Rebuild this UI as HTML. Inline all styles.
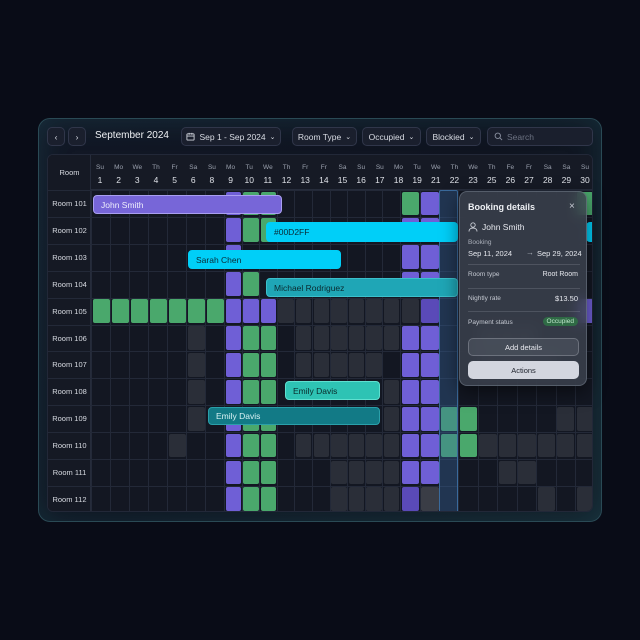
<!DOCTYPE html>
<html><head><meta charset="utf-8"><style>
*{box-sizing:border-box;margin:0;padding:0}
body{width:640px;height:640px;background:#090c17;font-family:"Liberation Sans",sans-serif;color:#e6e8ee;position:relative;overflow:hidden}
.panel{position:absolute;left:38px;top:118px;width:564px;height:404px;border-radius:12px;background:linear-gradient(135deg,#121826 0%,#0f1420 50%,#13202a 100%);border:1px solid #2a4a55;box-shadow:0 0 30px rgba(40,120,130,.25) inset}
.abs{position:absolute}
.btn{position:absolute;top:127px;height:19px;border:1px solid #30364a;border-radius:5px;background:#1a1f2d;font-size:8.5px;color:#d8dbe3;display:flex;align-items:center;justify-content:center;gap:4px}
.grid{position:absolute;left:47px;top:154px;width:546px;height:358px;border-radius:6px;background:#131722;overflow:hidden;border:1px solid #222838}
.hd{position:absolute;font-size:6.5px;color:#9aa0ad;text-align:center;width:19px}
.dn{position:absolute;font-size:8.5px;color:#dfe2e8;text-align:center;width:19px}
.rl{position:absolute;left:0;width:43px;font-size:7.5px;color:#d8dbe2;text-align:center}
.c{position:absolute;border-radius:2px}
.bar{position:absolute;border-radius:4px;font-size:8.5px;display:flex;align-items:center;padding-left:7px}
.pop{position:absolute;left:459px;top:191px;width:128px;height:195px;border-radius:8px;background:rgba(60,66,78,.82);border:1px solid rgba(150,160,175,.35);backdrop-filter:blur(6px);box-shadow:0 6px 18px rgba(0,0,0,.5)}
.pop .t{position:absolute;font-size:7px;color:#c5c9d2}
.sep{position:absolute;left:8px;width:112px;height:1px;background:rgba(180,185,195,.2)}
</style></head><body>
<div class="panel"></div>
<div class="btn" style="left:47px;width:18px">‹</div>
<div class="btn" style="left:68px;width:18px">›</div>
<div class="abs" style="left:95px;top:130px;font-size:10px;color:#eef0f4">September 2024</div>
<div class="btn" style="left:181px;width:100px"><svg width="9" height="9" viewBox="0 0 10 10"><rect x="1" y="2" width="8" height="7" rx="1" fill="none" stroke="#cfd3db"/><path d="M1 4.5h8M3.5 1v2M6.5 1v2" stroke="#cfd3db"/></svg>Sep 1 - Sep 2024 <span style="font-size:7px">⌄</span></div>
<div class="btn" style="left:292px;width:65px">Room Type <span style="font-size:7px">⌄</span></div>
<div class="btn" style="left:362px;width:59px">Occupied <span style="font-size:7px">⌄</span></div>
<div class="btn" style="left:426px;width:55px">Blockied <span style="font-size:7px">⌄</span></div>
<div class="btn" style="left:487px;width:106px;justify-content:flex-start;padding-left:6px;color:#6c7282"><svg width="9" height="9" viewBox="0 0 10 10"><circle cx="4.2" cy="4.2" r="3" fill="none" stroke="#8a90a0"/><path d="M6.5 6.5l2.5 2.5" stroke="#8a90a0"/></svg>Search</div>
<div class="grid" id="g"></div>
<div class="pop">
<div class="t" style="left:8px;top:10px;font-size:9px;color:#eef0f4;font-weight:bold">Booking details</div>
<div class="t" style="left:109px;top:9px;font-size:10px;color:#c8ccd4">×</div>
<svg class="abs" style="left:8px;top:30px" width="10" height="10" viewBox="0 0 10 10"><circle cx="5" cy="3" r="2.2" fill="none" stroke="#c8ccd4" stroke-width=".9"/><path d="M1 9.5c0-2.5 2-3.5 4-3.5s4 1 4 3.5" fill="none" stroke="#c8ccd4" stroke-width=".9"/></svg>
<div class="t" style="left:22px;top:30px;font-size:8.5px;color:#e6e8ee">John Smith</div>
<div class="t" style="left:8px;top:47px;font-size:6.5px;color:#a9aeb8">Booking</div>
<div class="t" style="left:8px;top:57px;font-size:7.5px;color:#e6e8ee">Sep 11, 2024</div>
<div class="t" style="left:66px;top:56px;font-size:8px;color:#a9aeb8">→</div>
<div class="t" style="left:77px;top:57px;font-size:7.5px;color:#e6e8ee">Sep 29, 2024</div>
<div class="sep" style="top:72px"></div>
<div class="t" style="left:8px;top:79px;font-size:6.5px">Room type</div>
<div class="t" style="right:8px;top:79px;font-size:7px;color:#e6e8ee">Root Room</div>
<div class="sep" style="top:96px"></div>
<div class="t" style="left:8px;top:103px;font-size:6.5px">Nightly rate</div>
<div class="t" style="right:8px;top:102px;font-size:7.5px;color:#e6e8ee">$13.50</div>
<div class="sep" style="top:119px"></div>
<div class="t" style="left:8px;top:127px;font-size:6.5px">Payment status</div>
<div class="t" style="right:8px;top:125px;font-size:6.5px;color:#bfe8cb;background:#2f6a45;border-radius:6px;padding:1px 4px">Occupied</div>
<div class="abs" style="left:8px;top:146px;width:111px;height:18px;border-radius:5px;border:1px solid rgba(180,185,195,.35);background:rgba(80,86,98,.6);font-size:7.5px;color:#e6e8ee;display:flex;align-items:center;justify-content:center">Add details</div>
<div class="abs" style="left:8px;top:169px;width:111px;height:18px;border-radius:5px;background:#d3d6df;font-size:7.5px;color:#1e222c;display:flex;align-items:center;justify-content:center">Actions</div>
</div>
<script>
var g=document.getElementById('g');
var days=[1,2,3,4,5,6,8,9,10,11,12,13,14,15,16,17,18,19,21,22,23,25,26,27,28,29,30];
var names=['Su','Mo','We','Th','Fr','Sa','Su','Mo','Tu','We','Th','Fr','Fr','Sa','Su','Su','Mo','Tu','We','Th','We','Th','Fe','Fr','Sa','Sa','Su'];
var anch=[[0,91],[7,224],[17,400],[19,439],[26,575]];
function cx(i){for(var a=0;a<anch.length-1;a++){var p=anch[a],q=anch[a+1];if(i<=q[0])return p[1]+(i-p[0])*(q[1]-p[1])/(q[0]-p[0])-47;}return 528;}
function cw(i){return i<26?cx(i+1)-cx(i):18.5;}
var RH=26.9,Y0=35;
var h='<div style="position:absolute;left:0;top:0;width:546px;height:35px;background:#161a25;border-bottom:1px solid #262c3b"></div>';
h+='<div style="position:absolute;left:0;top:0;width:43px;height:358px;background:#151924;border-right:1px solid #262c3b"></div>';
h+='<div class="rl" style="top:13px">Room</div>';
var lab=[[0,99],[26,584]];
for(var i=0;i<27;i++){var lx=99+i*(485/26)-47-9.5;h+='<div class="hd" style="left:'+lx+'px;top:9px">'+names[i]+'</div><div class="dn" style="left:'+lx+'px;top:20px">'+days[i]+'</div>';
h+='<div style="position:absolute;left:'+(cx(i)-1)+'px;top:35px;width:1px;height:323px;background:#232938"></div>';}
var P='#6f5fd6',G='#4aa86c',R='#2a2e38',PD='#5a4ab8';
var rows={
0:{7:P,8:G,9:G,17:G,18:P,26:G},
1:{7:P,8:G,9:G,17:P,18:P},
2:{7:P,17:P,18:P},
3:{7:P,8:G,17:P,18:P},
4:{0:G,1:G,2:G,3:G,4:G,5:G,6:G,7:P,8:P,9:P,10:R,11:R,12:R,13:R,14:R,15:R,16:R,17:R,18:PD,26:P},
5:{5:R,7:P,8:G,9:G,11:R,12:R,13:R,14:R,15:R,16:R,17:P,18:P,21:R,22:R,23:R},
6:{5:R,7:P,8:G,9:G,11:R,12:R,13:R,14:R,15:R,17:P,18:P,21:R,22:R,23:R,24:R},
7:{5:R,7:P,8:G,9:G,16:R,17:P,18:P},
8:{5:R,7:P,8:G,9:G,16:R,17:P,18:P,19:G,20:G,25:R,26:R},
9:{4:R,7:P,8:G,9:G,11:R,12:R,13:R,14:R,15:R,16:R,17:P,18:P,19:G,20:G,21:R,22:R,23:R,24:R,25:R,26:R},
10:{7:P,8:G,9:G,13:R,14:R,15:R,16:R,17:P,18:P,22:R,23:R},
11:{7:P,8:G,9:G,13:R,14:R,15:R,16:R,17:PD,18:'#3a3d46',24:R,26:R}};
for(var r=0;r<12;r++){var y=Y0+r*RH;
h+='<div style="position:absolute;left:0;top:'+y+'px;width:546px;height:1px;background:#232938"></div>';
h+='<div class="rl" style="top:'+(y+9)+'px">Room '+(101+r)+'</div>';
var o=rows[r];for(var k in o){k=+k;h+='<div class="c" style="left:'+(cx(k)+0.5)+'px;top:'+(y+1.5)+'px;width:'+(cw(k)-2)+'px;height:'+(RH-3)+'px;background:'+o[k]+'"></div>';}}
h+='<div style="position:absolute;left:'+(cx(19)-1)+'px;top:35px;width:'+cw(19)+'px;height:323px;background:rgba(60,110,170,.35);border:1px solid #3a6a9c;border-radius:2px"></div>';
function bar(x1,y1,x2,y2,bg,col,t,bd){h+='<div class="bar" style="left:'+(x1-47)+'px;top:'+(y1-154)+'px;width:'+(x2-x1)+'px;height:'+(y2-y1)+'px;background:'+bg+';color:'+col+';border:1px solid '+bd+'">'+t+'</div>';}
bar(92,194,281,213,'#7766d8','#eeeefc','John Smith','#a99ff0');
bar(265,221,457,241,'#00cff8','#0a2a36','#00D2FF','#00cff8');
bar(585,221,600,241,'#00cff8','#000','','#00cff8');
bar(187,249,340,268,'#00cff8','#0a2a36','Sarah Chen','#00cff8');
bar(265,277,457,296,'#1fa6b6','#0a2a30','Michael Rodriguez','#3cc0cc');
bar(284,380,379,399,'#2ec3b4','#0a2a2a','Emily Davis','#5fe0d0');
bar(207,406,379,424,'#127a86','#d8f2f4','Emily Davis','#2aa0aa');
g.innerHTML=h;
</script>
</body></html>
